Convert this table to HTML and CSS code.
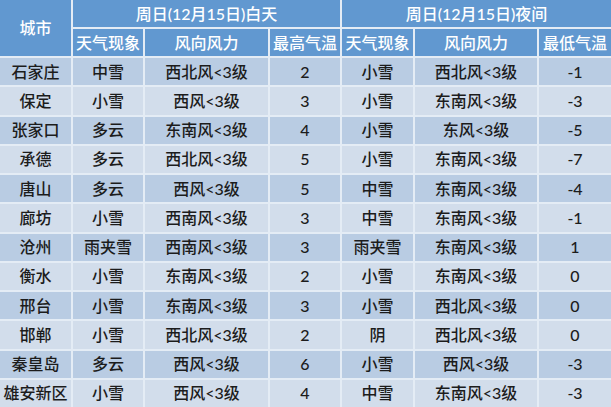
FILE: index.html
```html
<!DOCTYPE html>
<html lang="zh-CN">
<head>
<meta charset="utf-8">
<link rel="stylesheet" href="styles.css">
</head>
<body>
<div class="weather">
  <div class="head city-h">城市</div>
  <div class="head day-h">周日(12月15日)白天</div>
  <div class="head night-h">周日(12月15日)夜间</div>
  <div class="head">天气现象</div><div class="head">风向风力</div><div class="head">最高气温</div>
  <div class="head">天气现象</div><div class="head">风向风力</div><div class="head">最低气温</div>
  <div class="rows">
    <div class="row"><div>石家庄</div><div>中雪</div><div>西北风&lt;3级</div><div>2</div><div>小雪</div><div>西北风&lt;3级</div><div>-1</div></div>
    <div class="row"><div>保定</div><div>小雪</div><div>西风&lt;3级</div><div>3</div><div>小雪</div><div>东南风&lt;3级</div><div>-3</div></div>
    <div class="row"><div>张家口</div><div>多云</div><div>东南风&lt;3级</div><div>4</div><div>小雪</div><div>东风&lt;3级</div><div>-5</div></div>
    <div class="row"><div>承德</div><div>多云</div><div>西北风&lt;3级</div><div>5</div><div>小雪</div><div>东南风&lt;3级</div><div>-7</div></div>
    <div class="row"><div>唐山</div><div>多云</div><div>西风&lt;3级</div><div>5</div><div>中雪</div><div>东南风&lt;3级</div><div>-4</div></div>
    <div class="row"><div>廊坊</div><div>小雪</div><div>西南风&lt;3级</div><div>3</div><div>中雪</div><div>东南风&lt;3级</div><div>-1</div></div>
    <div class="row"><div>沧州</div><div>雨夹雪</div><div>西南风&lt;3级</div><div>3</div><div>雨夹雪</div><div>东南风&lt;3级</div><div>1</div></div>
    <div class="row"><div>衡水</div><div>小雪</div><div>东南风&lt;3级</div><div>2</div><div>小雪</div><div>东南风&lt;3级</div><div>0</div></div>
    <div class="row"><div>邢台</div><div>小雪</div><div>东南风&lt;3级</div><div>3</div><div>小雪</div><div>西北风&lt;3级</div><div>0</div></div>
    <div class="row"><div>邯郸</div><div>小雪</div><div>西北风&lt;3级</div><div>2</div><div>阴</div><div>西北风&lt;3级</div><div>0</div></div>
    <div class="row"><div>秦皇岛</div><div>多云</div><div>西风&lt;3级</div><div>6</div><div>小雪</div><div>西风&lt;3级</div><div>-3</div></div>
    <div class="row"><div>雄安新区</div><div>小雪</div><div>西风&lt;3级</div><div>4</div><div>中雪</div><div>东南风&lt;3级</div><div>-3</div></div>
  </div>
</div>
</body>
</html>
```
FILE: styles.css
```css
html, body {
  margin: 0;
  padding: 0;
}
.weather {
  width: 611px;
  height: 407px;
  display: grid;
  grid-template-columns: 71px 70px 123px 70px 71px 122px 72px;
  grid-template-rows: 27px 27px repeat(12, 1fr);
  gap: 2px;
  background: #e4ecf5;
  font-family: Lato, "Noto Sans CJK SC", sans-serif;
  font-size: 16px;
  font-weight: 500;
  color: #1c1c1c;
  line-height: 1;
}
.rows, .row { display: contents; }
.head,
.row > div {
  display: flex;
  align-items: center;
  justify-content: center;
  white-space: nowrap;
  overflow: hidden;
}
.head {
  background: #6198d0;
  color: #ffffff;
}
.city-h { grid-row: 1 / span 2; }
.day-h { grid-column: 2 / span 3; }
.night-h { grid-column: 5 / span 3; }
.row:nth-child(odd) > div { background: #b9cce3; }
.row:nth-child(even) > div { background: #d2ddeb; }
```
